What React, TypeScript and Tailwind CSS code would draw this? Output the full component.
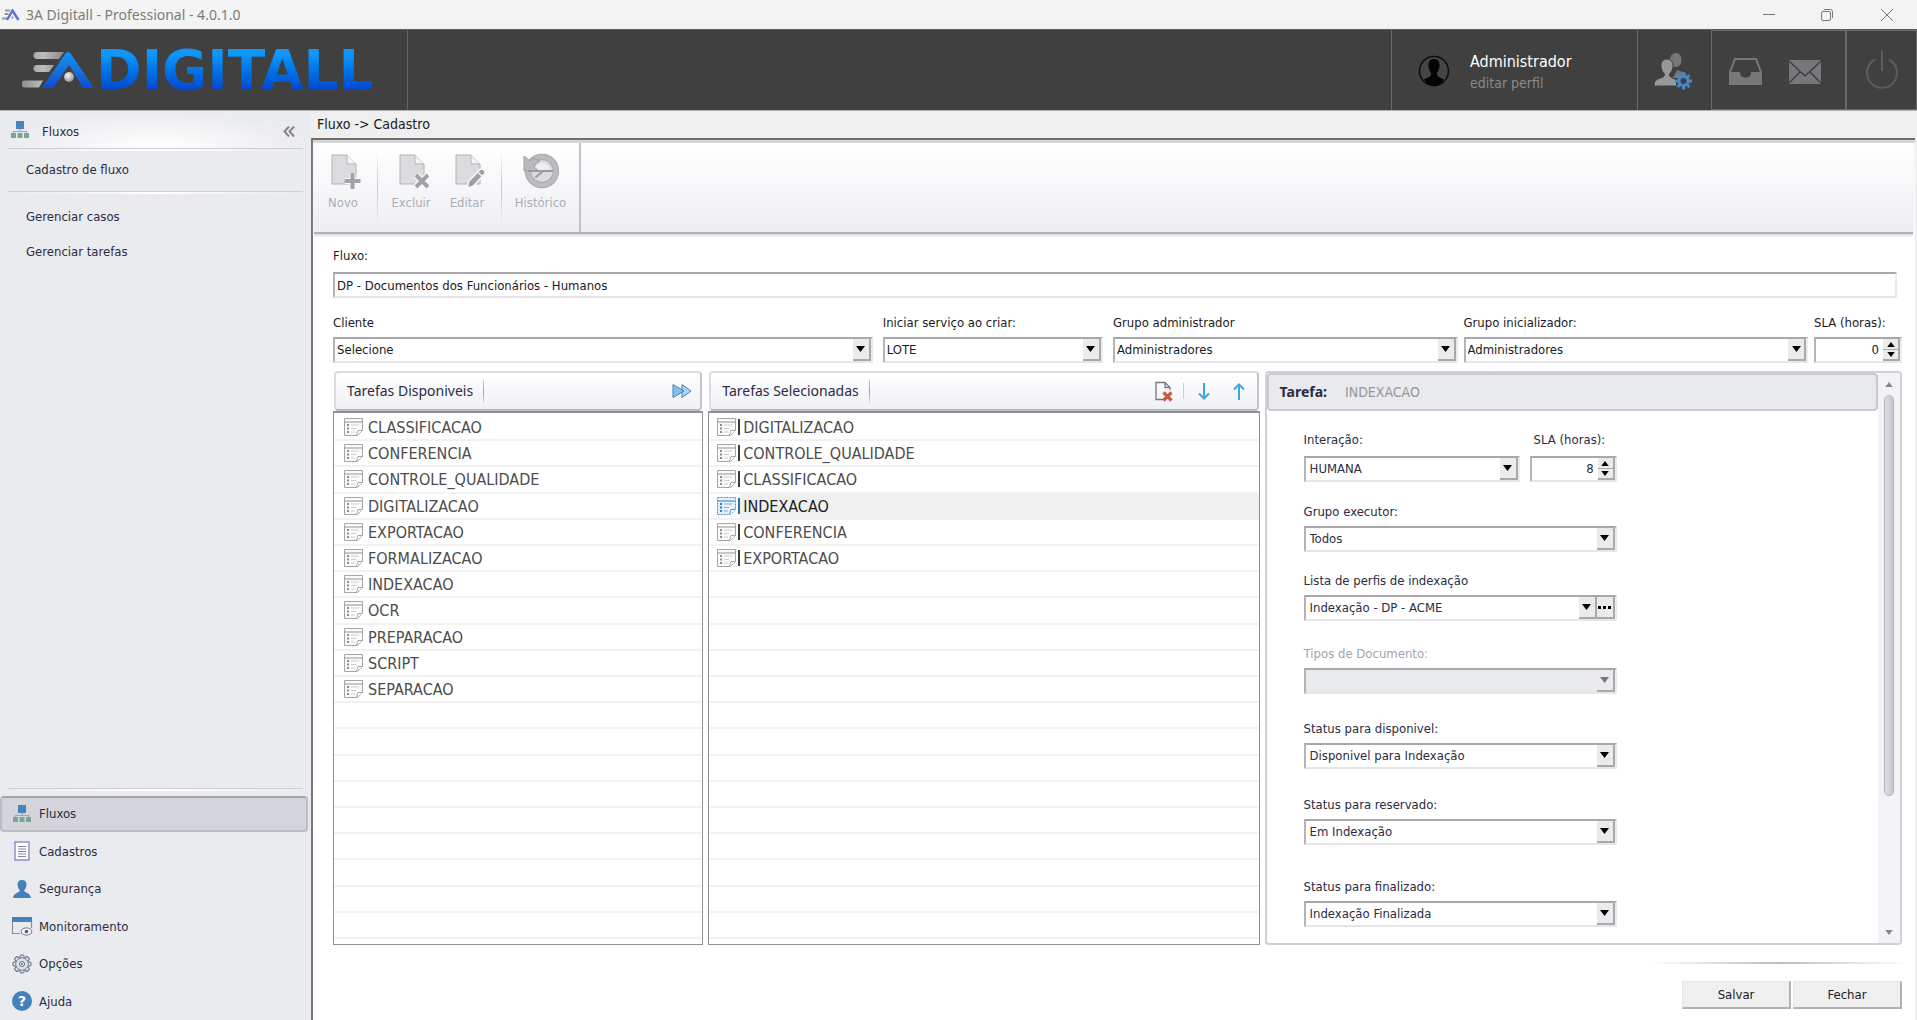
import { useState, type ReactNode } from "react";

const available = [
  "CLASSIFICACAO",
  "CONFERENCIA",
  "CONTROLE_QUALIDADE",
  "DIGITALIZACAO",
  "EXPORTACAO",
  "FORMALIZACAO",
  "INDEXACAO",
  "OCR",
  "PREPARACAO",
  "SCRIPT",
  "SEPARACAO",
];
const chosen = ["DIGITALIZACAO", "CONTROLE_QUALIDADE", "CLASSIFICACAO", "INDEXACAO", "CONFERENCIA", "EXPORTACAO"];
const ROWS = 20;

/* ---------- icons ---------- */

function AppMark() {
  return (
    <svg width="19" height="12" viewBox="0 0 19 12" aria-hidden="true">
      <path d="M4 1.500h5M3.500 5h4M1 9.500h5" stroke="#9a9a9a" strokeWidth="1.800" />
      <path d="M6 11 11.500 1.500 17.500 11" fill="none" stroke="#5873dc" strokeWidth="2.400" />
      <circle cx="11.500" cy="8.500" r="1.200" fill="#aaa" />
    </svg>
  );
}

function LogoMark() {
  return (
    <svg width="74" height="38" viewBox="0 0 74 38" aria-hidden="true" className="shrink-0">
      <defs>
        <linearGradient id="bars" x1="0" y1="0" x2="1" y2="0">
          <stop offset="0" stopColor="#8c8c8c" />
          <stop offset="0.5" stopColor="#bdbdbd" />
          <stop offset="1" stopColor="#8a8a8a" />
        </linearGradient>
        <linearGradient id="peak" x1="0" y1="0" x2="0" y2="1">
          <stop offset="0" stopColor="#0f93f7" />
          <stop offset="0.5" stopColor="#1573dc" />
          <stop offset="1" stopColor="#0a4fd2" />
        </linearGradient>
        <radialGradient id="ball" cx="0.4" cy="0.35" r="0.7">
          <stop offset="0" stopColor="#f4f4f4" />
          <stop offset="1" stopColor="#909090" />
        </radialGradient>
      </defs>
      <path d="M15 1h27l-5 7H15a3 3 0 0 1 0-7zM15 14h17l-5 7H15a3 3 0 0 1 0-7zM3 29.500h18l-4 7H3a3 3 0 0 1 0-7z" fill="url(#bars)" />
      <path d="M20 37 43 3q3-4 6 0l23 34H61L47 14 31 37z" fill="url(#peak)" />
      <circle cx="47" cy="26" r="5" fill="url(#ball)" />
    </svg>
  );
}

function FlowIcon() {
  return (
    <svg width="20" height="20" viewBox="0 0 20 20" aria-hidden="true">
      <path d="M10 9v3M3.500 13.500v-2h13v2" fill="none" stroke="#9aa7b5" strokeWidth="1.200" />
      <rect x="6" y="1" width="8" height="8" fill="#4a82bb" />
      <rect x="1" y="13" width="5" height="5" fill="#7ba696" />
      <rect x="7.500" y="13" width="5" height="5" fill="#7ba696" />
      <rect x="14" y="13" width="5" height="5" fill="#7ba696" />
    </svg>
  );
}

function DocIcon() {
  return (
    <svg width="20" height="20" viewBox="0 0 20 20" aria-hidden="true">
      <rect x="3" y="1" width="14" height="18" fill="#fff" stroke="#8d93c8" strokeWidth="1.500" />
      <path d="M6 5.500h8M6 8h8M6 10.500h8M6 13h8M6 15.500h8" stroke="#7f86b4" strokeWidth="1" />
    </svg>
  );
}

function PersonIcon() {
  return (
    <svg width="20" height="20" viewBox="0 0 20 20" aria-hidden="true">
      <path d="M10 1c3 0 4.500 2 4.500 4.600S12.800 11 12 12c1 1.500 6.500 2 7 7H1c.500-5 6-5.500 7-7C7.200 11 5.500 8.200 5.500 5.600S7 1 10 1z" fill="#4681bd" />
    </svg>
  );
}

function MonitorIcon() {
  return (
    <svg width="22" height="20" viewBox="0 0 22 20" aria-hidden="true">
      <path d="M1.500 4v13.500H9M20.500 4v8" fill="none" stroke="#8a9099" strokeWidth="1.200" />
      <rect x="1" y="1" width="20" height="5" fill="#4681bd" />
      <ellipse cx="15.500" cy="15.500" rx="5.300" ry="3.600" fill="#f3f5f8" stroke="#8a9099" strokeWidth="1.200" />
      <circle cx="15.500" cy="15.500" r="1.800" fill="#41648c" />
    </svg>
  );
}

const toothAngles = [0, 45, 90, 135, 180, 225, 270, 315];

function GearIcon() {
  return (
    <svg width="20" height="20" viewBox="0 0 20 20" aria-hidden="true">
      {toothAngles.map((a) => (
        <rect key={a} x="8" y="1" width="4" height="5" rx="1" fill="#dfe3ea" stroke="#5c6675" transform={`rotate(${a} 10 10)`} />
      ))}
      <circle cx="10" cy="10" r="6.200" fill="#d5dae3" stroke="#6a7484" />
      <circle cx="10" cy="10" r="5.600" fill="#dde1e9" />
      <circle cx="10" cy="10" r="2.500" fill="#fff" stroke="#56606f" />
      <circle cx="10" cy="10" r="1" fill="#56606f" />
    </svg>
  );
}

function HelpIcon() {
  return (
    <span className="grid size-5 place-items-center rounded-full bg-[#4681bd] font-['DejaVu_Sans',sans-serif] text-sm leading-none font-bold text-white">
      ?
    </span>
  );
}

function PageBase() {
  return (
    <>
      <path d="M5 2h15l9 9v20H5z" fill="#dcdcdf" stroke="#b3b3b6" />
      <path d="M20 2v9h9" fill="#f4f4f6" stroke="#b3b3b6" />
    </>
  );
}

function NewIcon() {
  return (
    <svg width="36" height="36" viewBox="-2 0 36 36" aria-hidden="true">
      <PageBase />
      <path d="M25.500 20v16M17.500 28h16" stroke="#fafafc" strokeWidth="6" />
      <path d="M25.500 20v16M17.500 28h16" stroke="#a2a2a6" strokeWidth="4" />
    </svg>
  );
}

function DeleteIcon() {
  return (
    <svg width="36" height="36" viewBox="-2 0 36 36" aria-hidden="true">
      <PageBase />
      <path d="m21 22 12 12M33 22 21 34" stroke="#fafafc" strokeWidth="6.500" />
      <path d="m21 22 12 12M33 22 21 34" stroke="#a2a2a6" strokeWidth="4" />
    </svg>
  );
}

function EditIcon() {
  return (
    <svg width="36" height="36" viewBox="-2 0 36 36" aria-hidden="true">
      <PageBase />
      <path d="m16.500 35.500 1-7L29 16.500q2-1.500 4 .5t.5 4L22.500 33z" fill="#a0a0a4" stroke="#fafafc" strokeWidth="1.500" />
      <path d="m26.500 19 5 4.500" stroke="#fafafc" strokeWidth="1.200" />
    </svg>
  );
}

function HistoryIcon() {
  return (
    <svg width="36" height="36" viewBox="0 0 36 36" aria-hidden="true">
      <circle cx="19" cy="18" r="14" fill="#dcdcdf" stroke="#a9a9ac" strokeWidth="6.500" />
      <circle cx="19" cy="18" r="14" fill="none" stroke="#bcbcbf" strokeWidth="4.500" />
      <path d="M10 18q2-8 9-8t9 8z" fill="#eeeef0" />
      <path d="M1 3v15h15l-5-4q2-4 6-6l-7-3-3 3z" fill="#bababd" stroke="#a0a0a3" strokeWidth="1" />
      <path d="M5 18h25M12.500 24.500 20 18" fill="none" stroke="#9c9ca0" strokeWidth="2" />
    </svg>
  );
}

function TaskIcon({ active = false }: { active?: boolean }) {
  const c = active ? "#4f95cf" : "#a5a5a5";
  const d = active ? "#2f7fc4" : "#8c8c8c";
  return (
    <svg width="19" height="20" viewBox="0 0 19 20" aria-hidden="true" className="shrink-0">
      <path d="M.5 1.500h18v12l-5 5H.5z" fill={active ? "#e4effa" : "#fafafa"} stroke={c} strokeDasharray={active ? "2 1" : undefined} />
      <path d="M.5 5h18" stroke={c} strokeWidth="1.200" />
      <path d="M18.500 13.500h-4.500l-1.500 5" fill="#fff" stroke={c} />
      <path d="M3 8h2M3 11.500h2M3 15h2" stroke={d} strokeWidth="2" />
      <path d="M7 8h8M7 11.500h5M7 15h4" stroke={active ? "#7fb3df" : "#cfcfcf"} strokeWidth="1.200" />
    </svg>
  );
}

function Triangle({ up = false, className = "" }: { up?: boolean; className?: string }) {
  return (
    <svg width="9" height="6" viewBox="0 0 9 6" aria-hidden="true" className={className}>
      <path d={up ? "M0 6h9L4.500 0z" : "M0 0h9L4.500 6z"} fill="currentColor" />
    </svg>
  );
}

/* ---------- form controls ---------- */

const sunken = "border-2 border-t-[#a8a8aa] border-l-[#b4b4b6] border-r-[#ececee] border-b-[#e6e6e8]";
const raised = "border-r-2 border-b-2 border-[#a9a9ab] bg-[#ebebed]";

function Field({ id, label, muted = false, className = "", children }: { id: string; label: string; muted?: boolean; className?: string; children: ReactNode }) {
  return (
    <div className={`flex min-w-0 flex-col gap-[5px] ${className}`}>
      <label htmlFor={id} className={`leading-[18px] whitespace-nowrap ${muted ? "text-[#a3a3ad]" : ""}`}>
        {label}
      </label>
      {children}
    </div>
  );
}

function Combo({ id, value, disabled = false, more = false, pad = "pl-0.5" }: { id: string; value: string; disabled?: boolean; more?: boolean; pad?: string }) {
  return (
    <div className={`relative flex h-[26px] ${sunken} ${disabled ? "bg-[#e9eaed]" : "bg-white"}`}>
      <select id={id} disabled={disabled} defaultValue={value} className={`w-full min-w-0 appearance-none bg-transparent ${pad} outline-none`}>
        <option value={value}>{value}</option>
      </select>
      <span className={`pointer-events-none absolute inset-y-0 grid w-[18px] place-items-center ${raised} ${more ? "right-[18px]" : "right-0"} ${disabled ? "text-[#77777b]" : "text-black"}`}>
        <Triangle />
      </span>
      {more && (
        <button type="button" aria-label="Mais opções" className={`flex w-[18px] shrink-0 items-center justify-center gap-0.5 ${raised}`}>
          <i className="size-[3px] bg-black" />
          <i className="size-[3px] bg-black" />
          <i className="size-[3px] bg-black" />
        </button>
      )}
    </div>
  );
}

function Spin({ id, initial }: { id: string; initial: number }) {
  const [n, setN] = useState(initial);
  return (
    <div className={`flex h-[26px] bg-white ${sunken}`}>
      <input id={id} inputMode="numeric" value={n} onChange={(e) => setN(Number(e.target.value) || 0)} className="w-full min-w-0 pr-1 text-right outline-none" />
      <div className="grid w-[17px] shrink-0 grid-rows-2 text-black">
        <button type="button" aria-label="Aumentar" onClick={() => setN(n + 1)} className="grid place-items-center border-r-2 border-b border-[#a9a9ab] bg-[#ebebed]">
          <Triangle up className="h-[5px] w-2" />
        </button>
        <button type="button" aria-label="Diminuir" onClick={() => setN(Math.max(0, n - 1))} className="grid place-items-center border-r-2 border-b-2 border-[#a9a9ab] bg-[#ebebed]">
          <Triangle className="h-[5px] w-2" />
        </button>
      </div>
    </div>
  );
}

/* ---------- page parts ---------- */

function TitleBar() {
  return (
    <div className="flex h-[29px] items-center bg-[#f3f3f3] pl-px text-[#7c7c7c]">
      <AppMark />
      <h1 className="ml-1.5 font-['Noto_Sans',sans-serif] text-sm">3A Digitall - Professional - 4.0.1.0</h1>
      <div className="ml-auto flex">
        <button type="button" aria-label="Minimizar" className="grid h-7 w-[58px] place-items-center">
          <svg width="12" height="12" viewBox="0 0 12 12"><path d="M0 5.500h12" stroke="#777" /></svg>
        </button>
        <button type="button" aria-label="Restaurar" className="grid h-7 w-[58px] place-items-center">
          <svg width="12" height="12" viewBox="0 0 12 12" fill="none" stroke="#777">
            <rect x=".5" y="2.500" width="9" height="9" rx="1.500" />
            <path d="M3 .5h6.500a2 2 0 0 1 2 2V9" />
          </svg>
        </button>
        <button type="button" aria-label="Fechar janela" className="grid h-7 w-[61px] place-items-center">
          <svg width="12" height="12" viewBox="0 0 12 12"><path d="m0 0 12 12M12 0 0 12" stroke="#777" /></svg>
        </button>
      </div>
    </div>
  );
}

function Header() {
  return (
    <header className="flex h-[82px] border-y border-t-[#5c5c5c] border-b-[#b4b4b4] bg-[#404040]">
      <div className="flex w-[408px] items-center border-r border-[#666] pl-[22px]">
        <LogoMark />
        <span className="bg-linear-to-b from-[#1197fa] from-25% to-[#0549d0] to-80% bg-clip-text font-['DejaVu_Sans',sans-serif] text-[55px] leading-[64px] font-bold text-transparent">
          DIGITALL
        </span>
      </div>
      <div className="ml-auto flex w-[247px] items-center border-x border-[#6a6a6a] pt-0.5 pl-[26px]">
        <svg width="32" height="32" viewBox="0 0 32 32" aria-hidden="true">
          <circle cx="16" cy="16" r="14.500" fill="#454545" stroke="#0c0c0c" strokeWidth="1.500" />
          <path d="M16 4c4 0 6 3 5.500 7.500-.3 3-1.800 5-2.500 6.500 0 2 .3 3 2 4l5 2.500C23.500 29 20 31 16 31S8.500 29 6 24.500L11 22c1.700-1 2-2 2-4-.7-1.500-2.200-3.500-2.500-6.500C10 7 12 4 16 4z" fill="#050505" />
        </svg>
        <div className="ml-5">
          <div className="text-base leading-6 text-white">Administrador</div>
          <a href="#perfil" className="block text-sm leading-[18px] text-[#8a8a8a]">editar perfil</a>
        </div>
      </div>
      <button type="button" aria-label="Usuários" className="grid w-[73px] place-items-center pt-0.5 pr-[3px]">
        <svg width="40" height="38" viewBox="0 0 40 38" aria-hidden="true">
          <path d="M23 1c3.500 0 5.500 3 5.500 7S26 15 23 15s-6-3-6-7 2.500-7 6-7zM24 18l9 3v5H20z" fill="#77777a" />
          <path d="M14 7c4 0 6.500 3.500 6 8-.4 3.500-2 5.500-3.500 7 0 2 .5 2.500 2 3.500l5 2.500v6H1c0-6 3-7 8-8.500 2-1 2.500-1.500 2.500-3.500C10 20.500 8.500 18.500 8 15c-.5-4.500 2-8 6-8z" fill="#98989a" stroke="#404040" strokeWidth="1" />
          {toothAngles.map((a) => (
            <rect key={a} x="29" y="20.500" width="3" height="5" fill="#4a86c4" transform={`rotate(${a} 30.500 29)`} />
          ))}
          <circle cx="30.500" cy="29" r="4.500" fill="#404040" stroke="#4a86c4" strokeWidth="3" />
        </svg>
      </button>
      <div className="flex w-[135px] items-center border border-[#6a6a6a] pt-[3px] pl-[17px]">
        <button type="button" aria-label="Caixa de entrada">
          <svg width="33" height="27" viewBox="0 0 33 27" aria-hidden="true">
            <path d="M6 1h21l5 13v12H1V14z" fill="none" stroke="#77777c" strokeWidth="2" />
            <path d="M1 14h10c0 5 3 5.500 5.500 5.500S22 19 22 14h10v12H1z" fill="#77777c" />
          </svg>
        </button>
        <button type="button" aria-label="Mensagens" className="ml-[27px]">
          <svg width="32" height="24" viewBox="0 0 32 24" aria-hidden="true">
            <rect width="32" height="24" fill="#77777c" />
            <path d="m0 1 16 15L32 1M0 23l11-11M32 23 21 12" fill="none" stroke="#404040" strokeWidth="1.500" />
          </svg>
        </button>
      </div>
      <button type="button" aria-label="Sair" className="grid w-[71px] place-items-center border border-[#6a6a6a]">
        <svg width="34" height="42" viewBox="0 0 34 42" fill="none" stroke="#5c5c5c" strokeWidth="2" aria-hidden="true">
          <path d="M17 1v21M10 10.500a15 15 0 1 0 14 0" />
        </svg>
      </button>
    </header>
  );
}

const rule = "mx-2 h-[3px] border-t border-[#cfd0d4] bg-linear-to-r from-transparent via-white to-transparent";

function Sidebar() {
  const links = [
    { label: "Fluxos", icon: <FlowIcon />, on: true },
    { label: "Cadastros", icon: <DocIcon /> },
    { label: "Segurança", icon: <PersonIcon /> },
    { label: "Monitoramento", icon: <MonitorIcon /> },
    { label: "Opções", icon: <GearIcon /> },
    { label: "Ajuda", icon: <HelpIcon /> },
  ];
  return (
    <aside className="flex w-[311px] shrink-0 flex-col bg-[#eaebef] text-[#2b2b42]">
      <div className="flex h-[37px] items-center bg-[radial-gradient(ellipse_at_bottom,#ffffff,#eaebef_70%)] pr-3.5 pl-2.5">
        <FlowIcon />
        <h2 className="ml-3 pt-1 leading-4">Fluxos</h2>
        <button type="button" aria-label="Recolher" className="mr-0.5 ml-auto pt-1">
          <svg width="12" height="11" viewBox="0 0 12 11" fill="none" stroke="#84848c" strokeWidth="2" aria-hidden="true">
            <path d="M6 .5 1.500 5.500 6 10.500M11 .5 6.500 5.500 11 10.500" />
          </svg>
        </button>
      </div>
      <div className={rule} />
      <nav className="flex flex-col">
        <a href="#cadastro" className="flex h-10 items-center pb-0.5 pl-[26px]">Cadastro de fluxo</a>
        <div className={rule} />
        <a href="#casos" className="mt-[5px] flex h-[35px] items-center pl-[26px]">Gerenciar casos</a>
        <a href="#tarefas" className="flex h-[35px] items-center pl-[26px]">Gerenciar tarefas</a>
      </nav>
      <div className="mt-auto">
        <div className={rule} />
        <nav className="mt-1 grid h-[225px] auto-rows-fr">
          {links.map((l) => (
            <a
              key={l.label}
              href={`#${l.label}`}
              className={
                l.on
                  ? "my-px mr-[3px] flex items-center rounded-sm border-2 border-[#bcbdc5] border-t-[#a5a6b0] bg-[#d4d5db] pl-[9px]"
                  : "flex items-center pl-[11px]"
              }
            >
              <span className="grid w-[22px] place-items-center">{l.icon}</span>
              <span className="ml-1.5">{l.label}</span>
            </a>
          ))}
        </nav>
      </div>
    </aside>
  );
}

function ToolButton({ label, icon, className }: { label: string; icon: ReactNode; className: string }) {
  return (
    <button type="button" className={`flex flex-col items-center gap-1.5 pt-2.5 text-[#abadb7] ${className}`}>
      {icon}
      <span className="leading-4">{label}</span>
    </button>
  );
}

function Toolbar() {
  return (
    <div className="mr-0.5 ml-px flex h-[91px] shrink-0 border-b-2 border-[#b0b1b8] bg-linear-to-b from-white to-[#edeef3] shadow-[0_2px_2px_#dcdde2]">
      <ToolButton label="Novo" icon={<NewIcon />} className="mr-[5px] w-[58px]" />
      <div className="my-1.5 w-px bg-linear-to-b from-transparent via-[#c6c7cd] to-transparent" />
      <ToolButton label="Excluir" icon={<DeleteIcon />} className="w-[66px]" />
      <ToolButton label="Editar" icon={<EditIcon />} className="mr-[11px] w-[46px]" />
      <div className="my-1.5 w-px bg-linear-to-b from-transparent via-[#c6c7cd] to-transparent" />
      <ToolButton label="Histórico" icon={<HistoryIcon />} className="w-[77px]" />
      <div className="w-0.5 bg-[#c2c3ca]" />
    </div>
  );
}

function ListHeader({ title, children }: { title: string; children: ReactNode }) {
  return (
    <div className="mx-px flex h-10 shrink-0 items-center rounded-sm border-2 border-[#dcdde4] border-r-[#c3c4cb] border-b-[#b9bac2] bg-linear-to-b from-white to-[#eff0f5] pr-2 pl-[11px] font-['Noto_Sans',sans-serif] text-sm text-[#2b2b42]">
      <h3>{title}</h3>
      <div className="ml-2.5 h-6 w-px bg-linear-to-b from-[#dddde2] via-[#9a9aa2] to-[#dddde2]" />
      {children}
    </div>
  );
}

function TaskList({ items, active, linked = false }: { items: string[]; active?: string; linked?: boolean }) {
  return (
    <ul className="grid min-h-0 flex-1 auto-rows-fr border border-t-2 border-[#8f9096] bg-white pt-0.5 pb-[5px] font-['DejaVu_Sans_Condensed','DejaVu_Sans',sans-serif] text-base leading-5 text-[#4c4c4c]">
      {Array.from({ length: ROWS }, (_, i) => {
        const name = items[i];
        const on = name !== undefined && name === active;
        return (
          <li key={i} className={`flex items-center border-b-2 border-[#f2f2f3] ${linked ? "pl-2" : "pl-2.5"}`}>
            {name && <TaskIcon active={on} />}
            {name && linked && <span className={`ml-0.5 h-4 w-0.5 shrink-0 ${on ? "bg-[#2f6da8]" : "bg-[#3a3a3a]"}`} />}
            {name && (
              <span className={`flex flex-1 items-center self-stretch pt-0.5 ${linked ? "pl-[3px]" : "pl-[5px]"} ${on ? "-mb-0.5 bg-[#efefef] pb-0.5 text-[#1c1c1c]" : ""}`}>
                {name}
              </span>
            )}
          </li>
        );
      })}
    </ul>
  );
}

function TaskDetails() {
  return (
    <section className="flex min-h-0 rounded-sm border-2 border-[#cfd0d6] bg-white text-[#2b2b42]">
      <div className="min-w-0 flex-1">
        <div className="flex h-[38px] items-center rounded-sm border-2 border-[#c9cad1] bg-[#e9eaee] pl-[11px]">
          <h3 className="font-['Noto_Sans',sans-serif] text-sm font-bold">Tarefa:</h3>
          <span className="ml-[18px] text-sm text-[#96969c]">INDEXACAO</span>
        </div>
        <div className="w-[350px] max-w-full pt-5 pl-[37px]">
          <div className="flex gap-2.5">
            <Field id="interacao" label="Interação:" className="w-[216px] gap-[7px]">
              <Combo id="interacao" value="HUMANA" pad="pl-1" />
            </Field>
            <Field id="sla-tarefa" label="SLA (horas):" className="flex-1 gap-[7px] [&>label]:pl-1">
              <Spin id="sla-tarefa" initial={8} />
            </Field>
          </div>
          <Field id="executor" label="Grupo executor:" className="mt-[21px]">
            <Combo id="executor" value="Todos" pad="pl-1" />
          </Field>
          <Field id="perfis" label="Lista de perfis de indexação" className="mt-5">
            <Combo id="perfis" value="Indexação - DP - ACME" more pad="pl-1" />
          </Field>
          <Field id="tipos" label="Tipos de Documento:" muted className="mt-6">
            <Combo id="tipos" value="" disabled pad="pl-1" />
          </Field>
          <Field id="disponivel" label="Status para disponivel:" className="mt-[26px]">
            <Combo id="disponivel" value="Disponivel para Indexação" pad="pl-1" />
          </Field>
          <Field id="reservado" label="Status para reservado:" className="mt-[27px]">
            <Combo id="reservado" value="Em Indexação" pad="pl-1" />
          </Field>
          <Field id="finalizado" label="Status para finalizado:" className="mt-[33px]">
            <Combo id="finalizado" value="Indexação Finalizada" pad="pl-1" />
          </Field>
        </div>
      </div>
      <div className="flex w-[22px] shrink-0 flex-col items-center bg-[#f3f3f7] py-2 text-[#87878f]">
        <button type="button" aria-label="Rolar para cima" className="mb-2 h-1.5"><Triangle up className="h-[5px] w-2" /></button>
        <div className="w-2.5 flex-[400] rounded-full border border-[#b4b5bd] bg-linear-to-r from-[#dfe0e6] to-[#c3c4cd]" />
        <div className="flex-[134]" />
        <button type="button" aria-label="Rolar para baixo" className="h-1.5"><Triangle className="h-[5px] w-2" /></button>
      </div>
    </section>
  );
}

const actionButton = "h-7 w-[109px] border border-r-2 border-b-2 border-[#e6e6e6] border-r-[#b2b2b4] border-b-[#b2b2b4] bg-[#efefef]";

export default function App() {
  return (
    <div className="flex min-h-screen flex-col bg-[#efefef] font-['DejaVu_Sans_Condensed','DejaVu_Sans',sans-serif] text-[13px] text-[#1a1a24]">
      <TitleBar />
      <Header />
      <div className="flex flex-1">
        <Sidebar />
        <main className="flex min-w-0 flex-1 flex-col pr-0.5">
          <div className="flex h-[27px] items-center pb-px pl-1.5 text-sm">Fluxo -&gt; Cadastro</div>
          <div className="flex flex-1 flex-col border-t-2 border-l-2 border-t-[#6e6e70] border-l-[#77777a] bg-white">
            <div className="h-[3px] shrink-0 bg-[#d6d6d8]" />
            <Toolbar />
            <div className="flex flex-1 flex-col pr-[13px] pl-5">
              <Field id="fluxo" label="Fluxo:" className="mt-[13px] mr-[5px] gap-[7px]">
                <input id="fluxo" defaultValue="DP - Documentos dos Funcionários - Humanos" className={`h-[26px] w-full bg-white pl-0.5 outline-none ${sunken}`} />
              </Field>
              <div className="mt-4 flex gap-2.5">
                <Field id="cliente" label="Cliente" className="flex-[539]">
                  <Combo id="cliente" value="Selecione" />
                </Field>
                <Field id="servico" label="Iniciar serviço ao criar:" className="flex-[220]">
                  <Combo id="servico" value="LOTE" />
                </Field>
                <div className="flex min-w-0 flex-[788] gap-1.5">
                  <Field id="administrador" label="Grupo administrador" className="flex-1">
                    <Combo id="administrador" value="Administradores" />
                  </Field>
                  <Field id="inicializador" label="Grupo inicializador:" className="flex-1">
                    <Combo id="inicializador" value="Administradores" />
                  </Field>
                  <Field id="sla" label="SLA (horas):" className="w-[88px]">
                    <Spin id="sla" initial={0} />
                  </Field>
                </div>
              </div>
              <div className="mt-2 grid flex-1 grid-cols-[370fr_551fr_637fr] gap-[5px]">
                <section className="flex min-h-0 flex-col">
                  <ListHeader title="Tarefas Disponiveis">
                    <button type="button" aria-label="Adicionar todas" className="ml-auto">
                      <svg width="20" height="16" viewBox="0 0 20 16" aria-hidden="true">
                        <path d="M10 1.500 19 8l-9 6.500z" fill="#a9d4f5" stroke="#4a80ad" />
                        <path d="M1 1.500 12 8 1 14.500z" fill="#83c0ef" stroke="#4a80ad" />
                      </svg>
                    </button>
                  </ListHeader>
                  <TaskList items={available} />
                </section>
                <section className="flex min-h-0 flex-col">
                  <ListHeader title="Tarefas Selecionadas">
                    <button type="button" aria-label="Remover tarefa" className="ml-auto">
                      <svg width="18" height="21" viewBox="0 0 18 21" fill="none" aria-hidden="true">
                        <path d="M8 18.500H1V1.500h9l5 5V9M10 1.500v5h5" stroke="#77777b" strokeWidth="1.300" />
                        <path d="m8.500 11.500 8 8M16.500 11.500l-8 8" stroke="#d4563a" strokeWidth="3.200" />
                      </svg>
                    </button>
                    <div className="mx-2.5 h-4 w-px bg-[#cdced4]" />
                    <button type="button" aria-label="Mover para baixo" className="ml-1">
                      <svg width="12" height="17" viewBox="0 0 12 17" fill="none" stroke="#3fa4e0" strokeWidth="2" aria-hidden="true">
                        <path d="M6 0v15.500M1 10.500l5 5 5-5" />
                      </svg>
                    </button>
                    <button type="button" aria-label="Mover para cima" className="mr-1 ml-[23px]">
                      <svg width="12" height="17" viewBox="0 0 12 17" fill="none" stroke="#3fa4e0" strokeWidth="2" aria-hidden="true">
                        <path d="M6 17V1.500M1 6.500l5-5 5 5" />
                      </svg>
                    </button>
                  </ListHeader>
                  <TaskList items={chosen} active="INDEXACAO" linked />
                </section>
                <TaskDetails />
              </div>
              <footer className="-mr-2 flex flex-col items-end pt-[17px] pb-[11px]">
                <div className="mb-[17px] h-0.5 w-[262px] bg-linear-to-r from-transparent via-[#bdbdbf] to-transparent" />
                <div className="mr-2 flex gap-0.5">
                  <button type="button" className={actionButton}>Salvar</button>
                  <button type="button" className={actionButton}>Fechar</button>
                </div>
              </footer>
            </div>
          </div>
        </main>
      </div>
    </div>
  );
}
